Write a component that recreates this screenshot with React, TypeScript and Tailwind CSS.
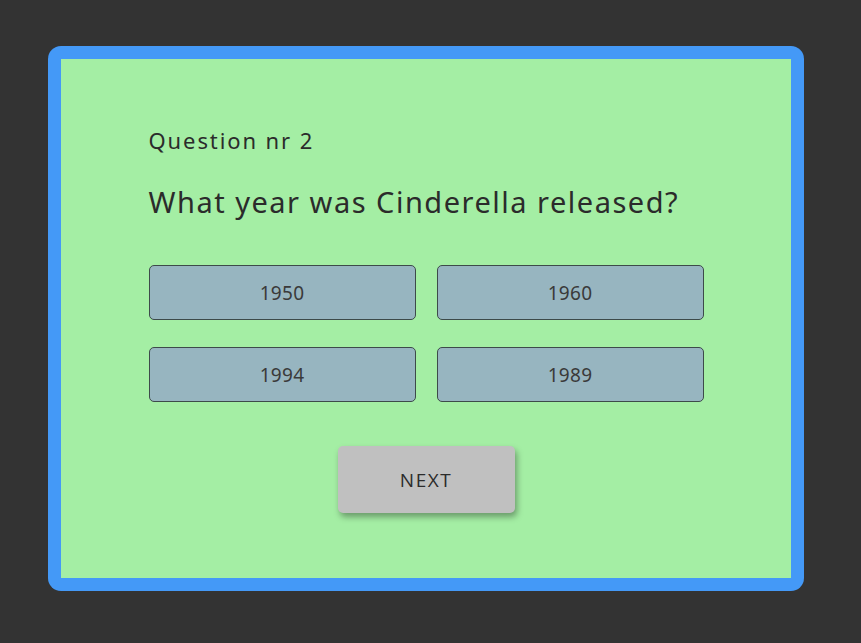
import React from "react";

export default function App() {
  const answers = ["1950", "1960", "1994", "1989"];
  return (
    <div className="min-h-[643px] w-full bg-[#333333] pt-[46px] pl-[48px]" style={{ fontFamily: '"Noto Sans", sans-serif' }}>
      <div className="w-[756px] h-[545px] rounded-[13px] bg-[#4499f7] p-[13px]">
        <div className="h-full w-full bg-[#a4eea4] flex flex-col items-center">
          <div className="w-[555px] pt-[66px] text-[#2b2b2b]">
            <div className="text-[22px] leading-[30px] tracking-[1.9px]">Question nr 2</div>
            <div className="mt-[27px] text-[29px] leading-[40px] tracking-[1.5px]">What year was Cinderella released?</div>
            <div className="mt-[43px] grid grid-cols-2 gap-x-[21px] gap-y-[27px]">
              {answers.map((a) => (
                <button
                  key={a}
                  className="h-[55px] pt-[2px] rounded-[5px] border border-[#3d4a4a] bg-[#97b5c0] text-[19px] text-[#3a3a3a] tracking-[0.3px]"
                >
                  {a}
                </button>
              ))}
            </div>
          </div>
          <button
            className="mt-[44px] w-[177px] h-[67px] pt-[2px] rounded-[5px] bg-[#c0c0c0] text-[19px] tracking-[1.5px] text-[#2b2b2b] shadow-[2px_4px_6px_rgba(0,0,0,0.35)]"
            style={{ fontFamily: '"Open Sans", sans-serif' }}
          >
            NEXT
          </button>
        </div>
      </div>
    </div>
  );
}
